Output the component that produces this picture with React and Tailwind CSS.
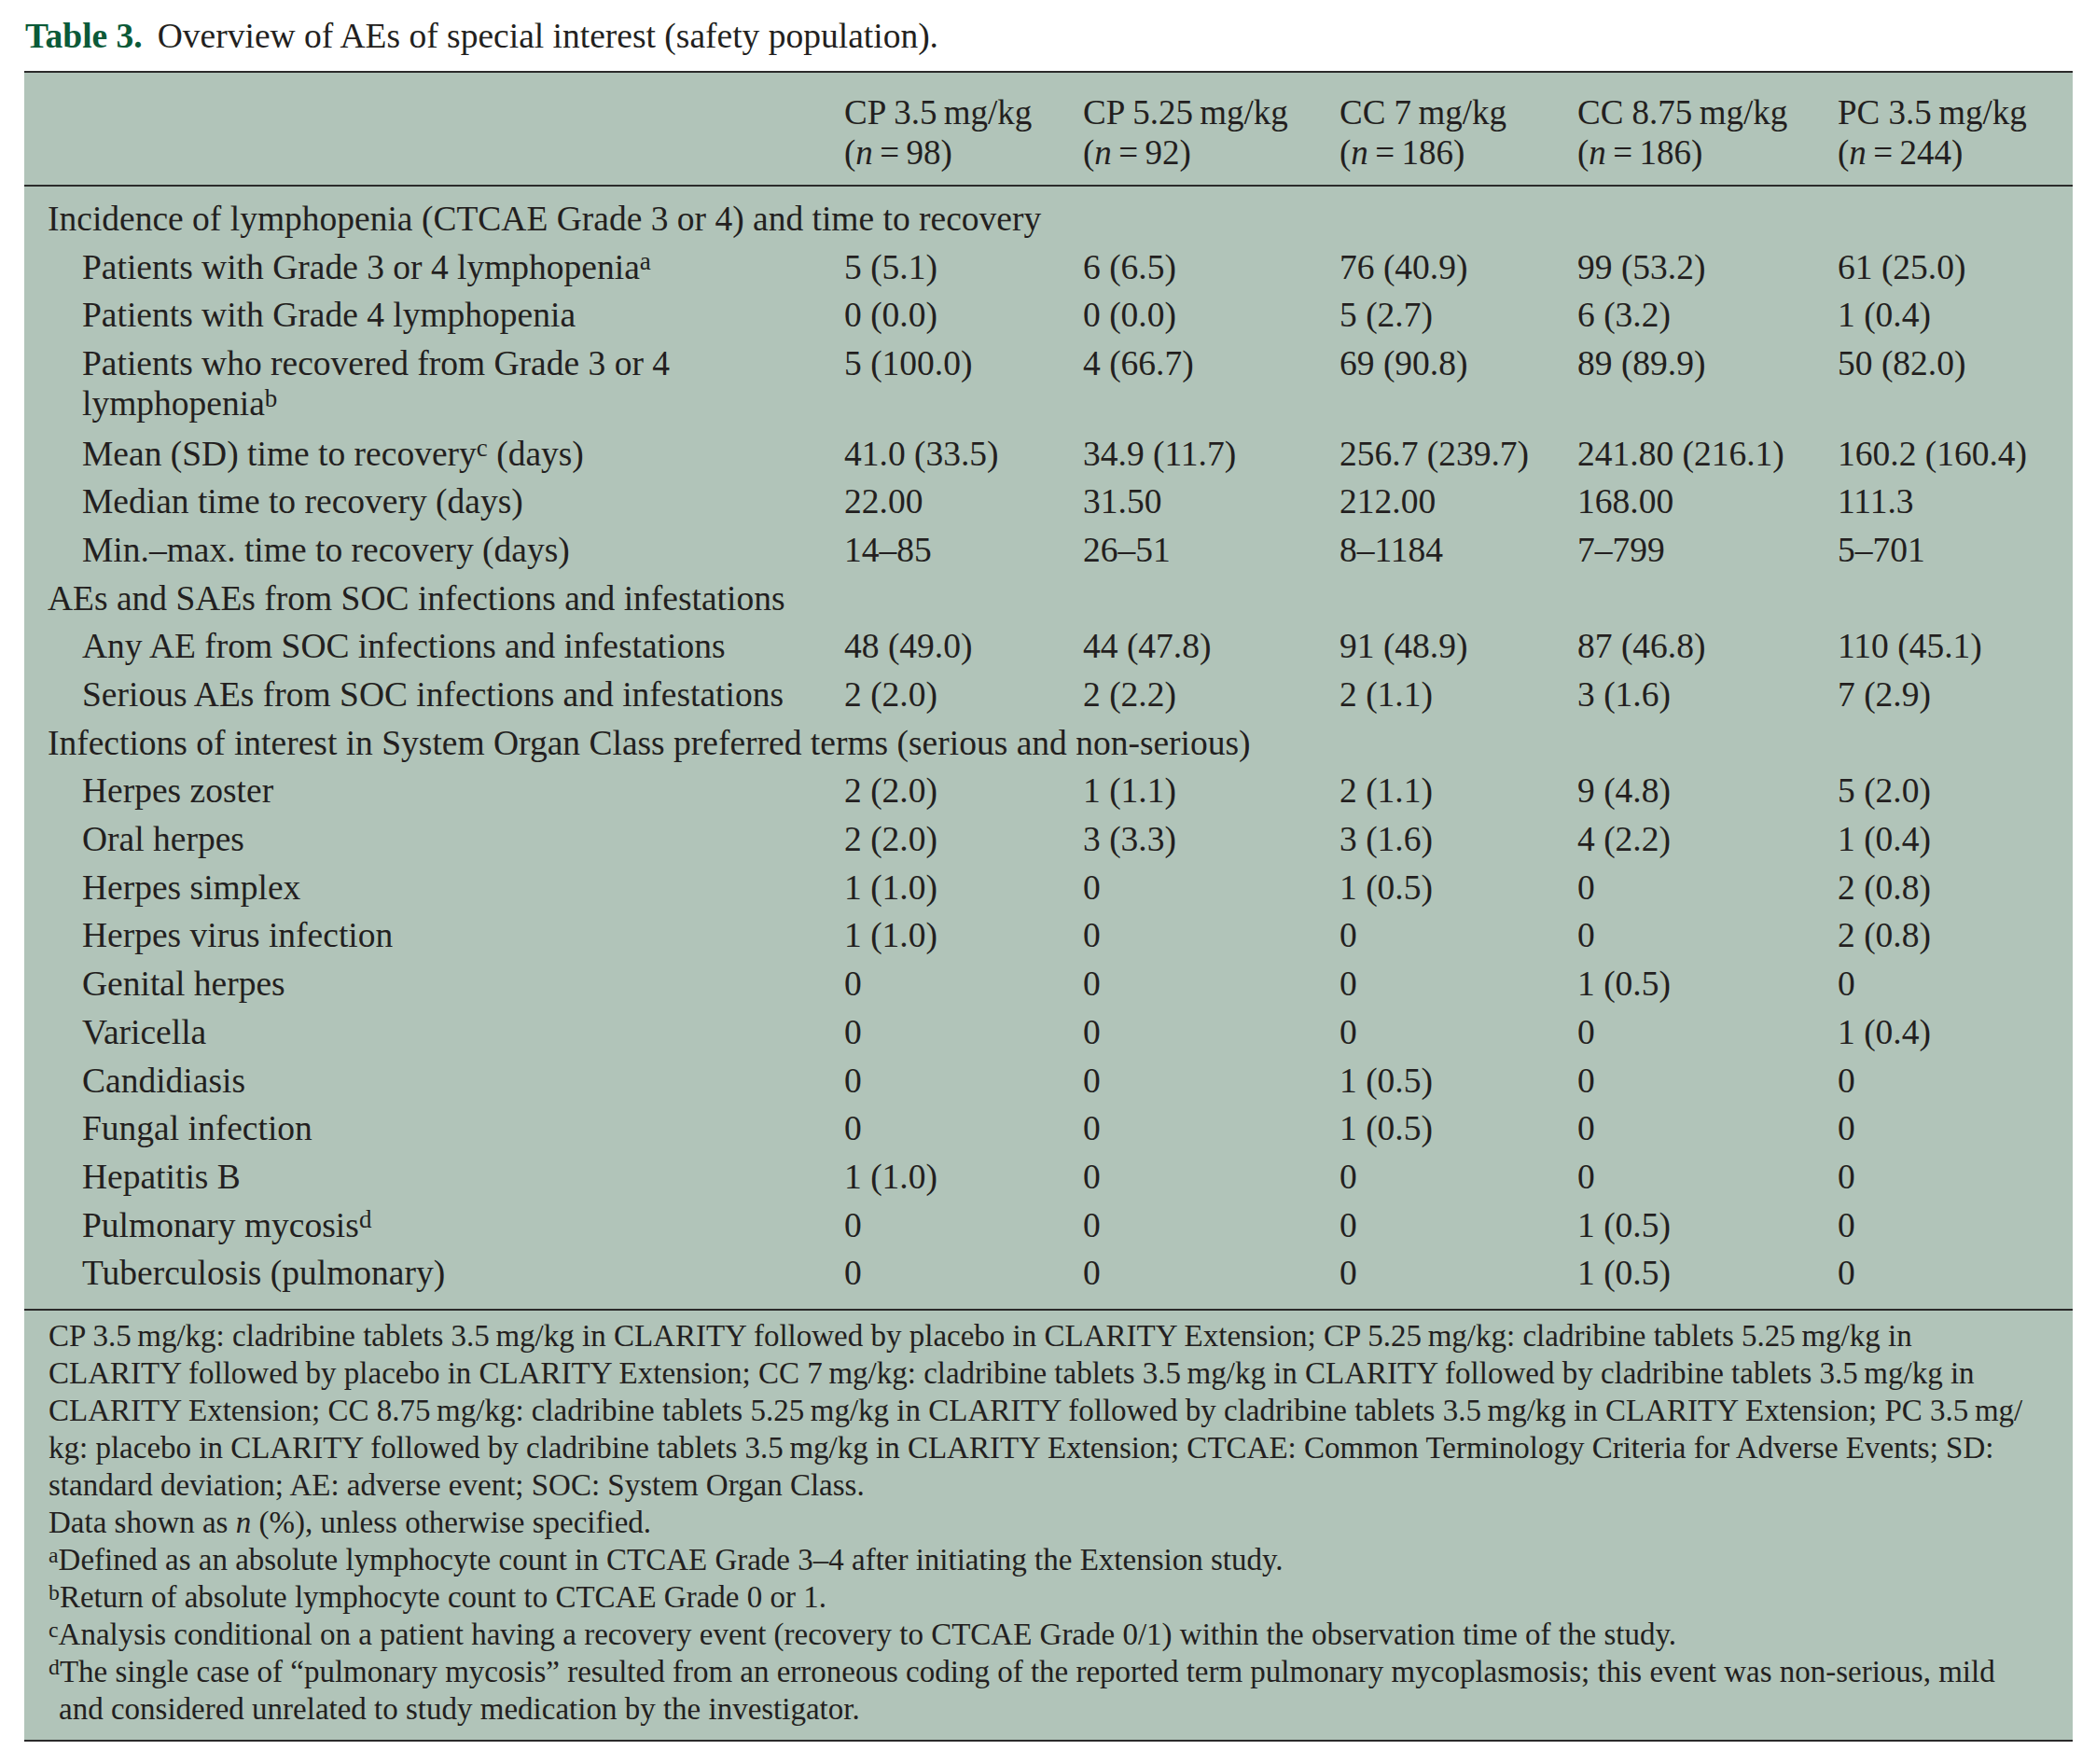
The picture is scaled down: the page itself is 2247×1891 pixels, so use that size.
import React from "react";

const Sup = ({ children }) => (
  <sup className="text-[0.72em] -top-[0.35em]">{children}</sup>
);

const N = ({ n }) => (
  <>
    (<i>n</i>{"\u2009=\u2009"}
    {n})
  </>
);

const columns = [
  { name: "CP 3.5\u2009mg/kg", n: "98" },
  { name: "CP 5.25\u2009mg/kg", n: "92" },
  { name: "CC 7\u2009mg/kg", n: "186" },
  { name: "CC 8.75\u2009mg/kg", n: "186" },
  { name: "PC 3.5\u2009mg/kg", n: "244" },
];

const rows = [
  { group: "Incidence of lymphopenia (CTCAE Grade 3 or 4) and time to recovery" },
  {
    label: (
      <>
        Patients with Grade 3 or 4 lymphopenia<Sup>a</Sup>
      </>
    ),
    v: ["5 (5.1)", "6 (6.5)", "76 (40.9)", "99 (53.2)", "61 (25.0)"],
  },
  {
    label: "Patients with Grade 4 lymphopenia",
    v: ["0 (0.0)", "0 (0.0)", "5 (2.7)", "6 (3.2)", "1 (0.4)"],
  },
  {
    label: (
      <>
        Patients who recovered from Grade 3 or 4
        <br />
        lymphopenia<Sup>b</Sup>
      </>
    ),
    v: ["5 (100.0)", "4 (66.7)", "69 (90.8)", "89 (89.9)", "50 (82.0)"],
    wrap: true,
  },
  {
    label: (
      <>
        Mean (SD) time to recovery<Sup>c</Sup> (days)
      </>
    ),
    v: ["41.0 (33.5)", "34.9 (11.7)", "256.7 (239.7)", "241.80 (216.1)", "160.2 (160.4)"],
  },
  {
    label: "Median time to recovery (days)",
    v: ["22.00", "31.50", "212.00", "168.00", "111.3"],
  },
  {
    label: "Min.–max. time to recovery (days)",
    v: ["14–85", "26–51", "8–1184", "7–799", "5–701"],
  },
  { group: "AEs and SAEs from SOC infections and infestations" },
  {
    label: "Any AE from SOC infections and infestations",
    v: ["48 (49.0)", "44 (47.8)", "91 (48.9)", "87 (46.8)", "110 (45.1)"],
  },
  {
    label: "Serious AEs from SOC infections and infestations",
    v: ["2 (2.0)", "2 (2.2)", "2 (1.1)", "3 (1.6)", "7 (2.9)"],
  },
  {
    group:
      "Infections of interest in System Organ Class preferred terms (serious and non-serious)",
  },
  { label: "Herpes zoster", v: ["2 (2.0)", "1 (1.1)", "2 (1.1)", "9 (4.8)", "5 (2.0)"] },
  { label: "Oral herpes", v: ["2 (2.0)", "3 (3.3)", "3 (1.6)", "4 (2.2)", "1 (0.4)"] },
  { label: "Herpes simplex", v: ["1 (1.0)", "0", "1 (0.5)", "0", "2 (0.8)"] },
  { label: "Herpes virus infection", v: ["1 (1.0)", "0", "0", "0", "2 (0.8)"] },
  { label: "Genital herpes", v: ["0", "0", "0", "1 (0.5)", "0"] },
  { label: "Varicella", v: ["0", "0", "0", "0", "1 (0.4)"] },
  { label: "Candidiasis", v: ["0", "0", "1 (0.5)", "0", "0"] },
  { label: "Fungal infection", v: ["0", "0", "1 (0.5)", "0", "0"] },
  { label: "Hepatitis B", v: ["1 (1.0)", "0", "0", "0", "0"] },
  {
    label: (
      <>
        Pulmonary mycosis<Sup>d</Sup>
      </>
    ),
    v: ["0", "0", "0", "1 (0.5)", "0"],
  },
  { label: "Tuberculosis (pulmonary)", v: ["0", "0", "0", "1 (0.5)", "0"] },
];

const notes = [
  "CP 3.5\u2009mg/kg: cladribine tablets 3.5\u2009mg/kg in CLARITY followed by placebo in CLARITY Extension; CP 5.25\u2009mg/kg: cladribine tablets 5.25\u2009mg/kg in",
  "CLARITY followed by placebo in CLARITY Extension; CC 7\u2009mg/kg: cladribine tablets 3.5\u2009mg/kg in CLARITY followed by cladribine tablets 3.5\u2009mg/kg in",
  "CLARITY Extension; CC 8.75\u2009mg/kg: cladribine tablets 5.25\u2009mg/kg in CLARITY followed by cladribine tablets 3.5\u2009mg/kg in CLARITY Extension; PC 3.5\u2009mg/",
  "kg: placebo in CLARITY followed by cladribine tablets 3.5\u2009mg/kg in CLARITY Extension; CTCAE: Common Terminology Criteria for Adverse Events; SD:",
  "standard deviation; AE: adverse event; SOC: System Organ Class.",
];

const grid = "grid grid-cols-[879px_256px_275px_255px_279px_1fr]";

export default function App() {
  return (
    <div
      className="min-h-screen bg-white text-[#231f20]"
      style={{ fontFamily: '"Liberation Serif", "Times New Roman", serif' }}
    >
      <div className="ml-[26px] w-[2196px] pt-[17px] pb-[20px]">
        <h1 className="pl-[1px] text-[37.5px] leading-[43px] whitespace-nowrap">
          <span className="font-bold text-[#0b5a38]">Table 3.</span>
          <span className="ml-[16px]">
            Overview of AEs of special interest (safety population).
          </span>
        </h1>

        <div className="mt-[16px] bg-[#b1c4b9] border-t-2 border-b-2 border-[#2b2b2b]">
          {/* header */}
          <div className={`${grid} border-b-2 border-[#2b2b2b] pt-[21px] pb-[13px] text-[37px] leading-[43px]`}>
            <div />
            {columns.map((c) => (
              <div key={c.name} className="whitespace-nowrap">
                <div>{c.name}</div>
                <div>
                  <N n={c.n} />
                </div>
              </div>
            ))}
          </div>

          {/* body */}
          <div className="pt-[9px] pb-[12px] text-[37.5px] leading-[43px]">
            {rows.map((r, i) =>
              r.group ? (
                <div key={i} className="pl-[25px] pt-[4px] pb-[4.7px] whitespace-nowrap">
                  {r.group}
                </div>
              ) : (
                <div
                  key={i}
                  className={`${grid} pt-[4px] ${r.wrap ? "pb-[6.5px]" : "pb-[4.7px]"} whitespace-nowrap`}
                >
                  <div className="pl-[62px]">{r.label}</div>
                  {r.v.map((v, j) => (
                    <div key={j}>{v}</div>
                  ))}
                </div>
              )
            )}
          </div>

          {/* footnotes */}
          <div className="border-t-2 border-[#2b2b2b] pl-[26px] pt-[7px] pb-[13px] text-[33px] leading-[40px] whitespace-nowrap">
            {notes.map((l, i) => (
              <div key={i}>{l}</div>
            ))}
            <div>
              Data shown as <i>n</i> (%), unless otherwise specified.
            </div>
            <div>
              <Sup>a</Sup>Defined as an absolute lymphocyte count in CTCAE Grade 3–4 after initiating the Extension study.
            </div>
            <div>
              <Sup>b</Sup>Return of absolute lymphocyte count to CTCAE Grade 0 or 1.
            </div>
            <div>
              <Sup>c</Sup>Analysis conditional on a patient having a recovery event (recovery to CTCAE Grade 0/1) within the observation time of the study.
            </div>
            <div>
              <Sup>d</Sup>The single case of “pulmonary mycosis” resulted from an erroneous coding of the reported term pulmonary mycoplasmosis; this event was non-serious, mild
            </div>
            <div className="pl-[11px]">
              and considered unrelated to study medication by the investigator.
            </div>
          </div>
        </div>
      </div>
    </div>
  );
}
